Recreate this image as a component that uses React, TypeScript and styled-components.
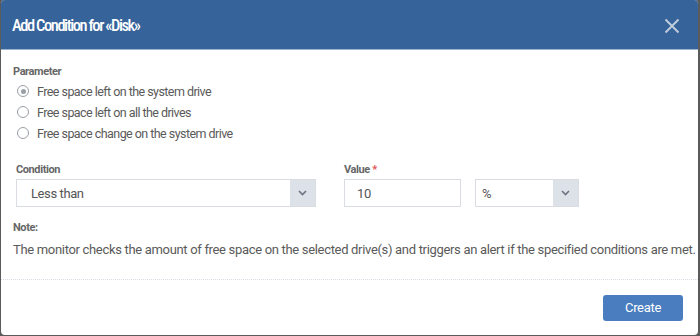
import React, { useState } from "react";
import styled, { createGlobalStyle } from "styled-components";

const GlobalStyle = createGlobalStyle`
  html, body {
    margin: 0;
    padding: 0;
    background: #5b5b5b;
  }
  body {
    font-family: Roboto, "Noto Sans", Arial, sans-serif;
  }
`;

const Dialog = styled.div`
  width: 697px;
  height: 335px;
  margin-left: 1px;
  background: #fff;
  border-radius: 4px;
  overflow: hidden;
  display: flex;
  flex-direction: column;
`;

const Header = styled.div`
  height: 50px;
  background: #35639a;
  border-bottom: 1px solid #9fb4cf;
  box-sizing: border-box;
  display: flex;
  align-items: center;
  justify-content: space-between;
  padding: 2px 18px 0 11px;
`;

const Title = styled.h1`
  margin: 0;
  font-size: 16.5px;
  font-weight: 500;
  color: #fff;
  font-stretch: 75%;
  letter-spacing: -1.45px;
`;

const Close = styled.button`
  border: 0;
  background: none;
  padding: 0;
  width: 16px;
  height: 16px;
  display: flex;
  cursor: pointer;
`;

const Body = styled.div`
  flex: 1;
  padding: 15px 12px 0 12px;
  display: flex;
  flex-direction: column;
`;

const Label = styled.div`
  font-size: 11px;
  font-weight: 700;
  color: #666;
  line-height: 14px;
  letter-spacing: -0.4px;
`;

const Required = styled.span`
  color: #e05050;
`;

const RadioList = styled.div`
  display: flex;
  flex-direction: column;
  gap: 5px;
  margin-top: 4px;
`;

const RadioRow = styled.label`
  display: flex;
  align-items: center;
  gap: 8px;
  height: 16px;
  font-size: 12.5px;
  color: #5a5a5a;
  cursor: pointer;
  padding-left: 4px;
  letter-spacing: -0.55px;
`;

const RadioCircle = styled.span<{ checked?: boolean }>`
  width: 12px;
  height: 12px;
  border: 1.5px solid #999fa6;
  border-radius: 50%;
  box-sizing: border-box;
  display: flex;
  align-items: center;
  justify-content: center;
  &::after {
    content: "";
    width: 5px;
    height: 5px;
    border-radius: 50%;
    background: ${(p) => (p.checked ? "#9aa0a6" : "transparent")};
  }
`;

const FieldsRow = styled.div`
  display: flex;
  margin-top: 22px;
  padding-left: 3px;
`;

const Field = styled.div<{ width: number }>`
  width: ${(p) => p.width}px;
  display: flex;
  flex-direction: column;
  gap: 2px;
`;

const Inline = styled.div`
  display: flex;
  gap: 14px;
`;

const Box = styled.div<{ width: number; pad: number }>`
  width: ${(p) => p.width}px;
  height: 28px;
  box-sizing: border-box;
  border: 1px solid #d9dce0;
  display: flex;
  align-items: center;
  padding-left: ${(p) => p.pad}px;
  font-size: 13px;
  color: #555;
  background: #fff;
  letter-spacing: -0.4px;
`;

const BoxText = styled.span`
  flex: 1;
`;

const Caret = styled.span`
  width: 25px;
  align-self: stretch;
  background: #dde2e8;
  display: flex;
  align-items: center;
  justify-content: center;
`;

const Note = styled.div`
  margin-top: 14px;
  display: flex;
  flex-direction: column;
  gap: 7px;
`;

const NoteText = styled.div`
  font-size: 13px;
  color: #5a5a5a;
  line-height: 15px;
  letter-spacing: -0.32px;
  white-space: nowrap;
`;

const Footer = styled.div`
  height: 55px;
  border-top: 1px dotted #d5dbe3;
  display: flex;
  align-items: center;
  justify-content: flex-end;
  padding: 0 15px 0 0;
`;

const Button = styled.button`
  width: 80px;
  height: 26px;
  border: 0;
  border-radius: 3px;
  background: #4a7dbf;
  color: #fff;
  font-family: inherit;
  font-size: 13px;
  letter-spacing: -0.3px;
  cursor: pointer;
`;

const Chevron = () => (
  <svg width="9" height="6" viewBox="0 0 9 6">
    <path d="M1 1l3.5 3.5L8 1" fill="none" stroke="#6b7280" strokeWidth="1.6" />
  </svg>
);

const options = [
  "Free space left on the system drive",
  "Free space left on all the drives",
  "Free space change on the system drive",
];

export default function App() {
  const [selected, setSelected] = useState(0);
  return (
    <>
      <GlobalStyle />
      <Dialog>
        <Header>
          <Title>Add Condition for «Disk»</Title>
          <Close aria-label="Close">
            <svg width="16" height="16" viewBox="0 0 16 16">
              <path d="M1.5 1.5l13 13M14.5 1.5l-13 13" stroke="#c3cfdf" strokeWidth="1.8" />
            </svg>
          </Close>
        </Header>
        <Body>
          <Label>Parameter</Label>
          <RadioList>
            {options.map((o, i) => (
              <RadioRow key={o} onClick={() => setSelected(i)}>
                <RadioCircle checked={selected === i} />
                {o}
              </RadioRow>
            ))}
          </RadioList>
          <FieldsRow>
            <Field width={328}>
              <Label>Condition</Label>
              <Box width={300} pad={14}>
                <BoxText>Less than</BoxText>
                <Caret>
                  <Chevron />
                </Caret>
              </Box>
            </Field>
            <Field width={240}>
              <Label>
                Value <Required>*</Required>
              </Label>
              <Inline>
                <Box width={117} pad={12}>
                  <BoxText>10</BoxText>
                </Box>
                <Box width={104} pad={6}>
                  <BoxText>%</BoxText>
                  <Caret>
                    <Chevron />
                  </Caret>
                </Box>
              </Inline>
            </Field>
          </FieldsRow>
          <Note>
            <Label>Note:</Label>
            <NoteText>
              The monitor checks the amount of free space on the selected drive(s) and triggers an alert if the
              specified conditions are met.
            </NoteText>
          </Note>
        </Body>
        <Footer>
          <Button>Create</Button>
        </Footer>
      </Dialog>
    </>
  );
}
